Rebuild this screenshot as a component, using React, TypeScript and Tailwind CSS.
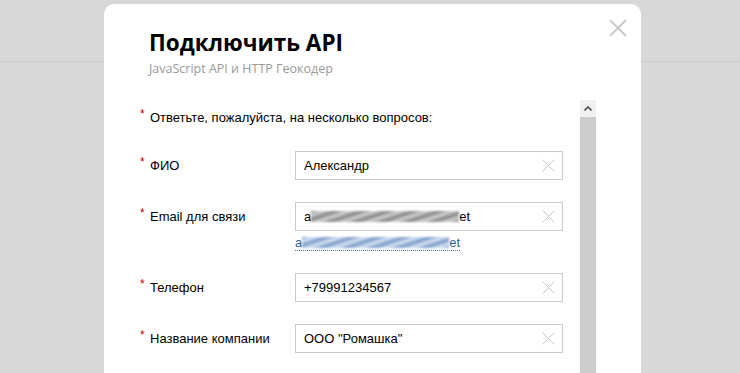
import type { ReactNode } from "react";

function ClearIcon() {
  return (
    <svg width="13" height="13" viewBox="0 0 13 13" className="shrink-0">
      <path d="M0.5 0.5L12.5 12.5M12.5 0.5L0.5 12.5" stroke="#c4c4c4" strokeWidth="1" />
    </svg>
  );
}

function Star() {
  return <span className="relative -top-[4px] w-[10px] shrink-0 text-[12px] leading-none text-[#c40000]">*</span>;
}

function Blur({ width, tone }: { width: string; tone: "gray" | "blue" }) {
  return tone === "gray" ? (
    <span
      className={`inline-block h-[11px] ${width} bg-[repeating-linear-gradient(162deg,#858585_0px,#d4d4d4_4px,#858585_8px)] blur-[1.3px]`}
    />
  ) : (
    <span
      className={`inline-block h-[11px] ${width} bg-[repeating-linear-gradient(162deg,#7799c9_0px,#dbe6f4_4px,#7799c9_8px)] blur-[1.3px]`}
    />
  );
}

function Field({ label, children, extra }: { label: string; children: ReactNode; extra?: ReactNode }) {
  return (
    <div className="flex items-start">
      <div className="flex h-[29px] w-[155px] items-center">
        <Star />
        <span>{label}</span>
      </div>
      <div className="w-[268px]">
        <div className="flex h-[29px] items-center border border-[#cccccc] bg-white pl-[8px] pr-[7px]">
          <div className="flex flex-1 items-center whitespace-nowrap">{children}</div>
          <ClearIcon />
        </div>
        {extra}
      </div>
    </div>
  );
}

export default function App() {
  return (
    <div className="relative h-[373px] w-[740px] overflow-hidden bg-[#d8d8d8]">
      <div className="h-[62px] border-b border-[#cacaca]" />

      <div className="absolute left-[104px] top-[4px] h-[420px] w-[537px] rounded-[10px] bg-white">
        <button className="absolute right-[14px] top-[15px]">
          <svg width="18" height="18" viewBox="0 0 18 18">
            <path d="M1 1L17 17M17 1L1 17" stroke="#c8c8c8" strokeWidth="1.8" />
          </svg>
        </button>

        <div className="pl-[45px] pt-[25px] font-['Open_Sans',sans-serif]">
          <h1 className="text-[22.5px] font-bold leading-[28px] text-black">Подключить API</h1>
          <div className="mt-[4px] text-[12.5px] leading-[16px] text-[#9a9a9a]">JavaScript API и HTTP Геокодер</div>
        </div>

        <div className="mt-[23px] flex h-[300px] pl-[36px] pr-[45px] font-['Liberation_Sans',Arial,sans-serif] text-[13px] leading-[16px] text-black">
          <div className="flex-1 pt-[10px]">
            <div className="flex items-center">
              <Star />
              <span>Ответьте, пожалуйста, на несколько вопросов:</span>
            </div>

            <div className="mt-[25px] flex flex-col gap-[22px]">
              <Field label="ФИО">Александр</Field>
              <Field
                label="Email для связи"
                extra={
                  <div className="mt-[4px] flex h-[16px] w-[165px] items-center border-b border-dotted border-[#4a73a8] text-[#2f5f9e]">
                    <span>a</span>
                    <Blur width="w-[147px]" tone="blue" />
                    <span>et</span>
                  </div>
                }
              >
                <span>a</span>
                <Blur width="w-[148px]" tone="gray" />
                <span>et</span>
              </Field>
              <Field label="Телефон">+79991234567</Field>
              <Field label="Название компании">ООО "Ромашка"</Field>
            </div>
          </div>

          <div className="flex w-[16px] flex-col">
            <div className="flex h-[17px] items-center justify-center bg-[#f1f1f1]">
              <svg width="8" height="5" viewBox="0 0 8 5">
                <path d="M0.5 4.5L4 1L7.5 4.5" fill="none" stroke="#505050" strokeWidth="1.6" />
              </svg>
            </div>
            <div className="flex-1 bg-[#cdcdcd]" />
          </div>
        </div>
      </div>
    </div>
  );
}
